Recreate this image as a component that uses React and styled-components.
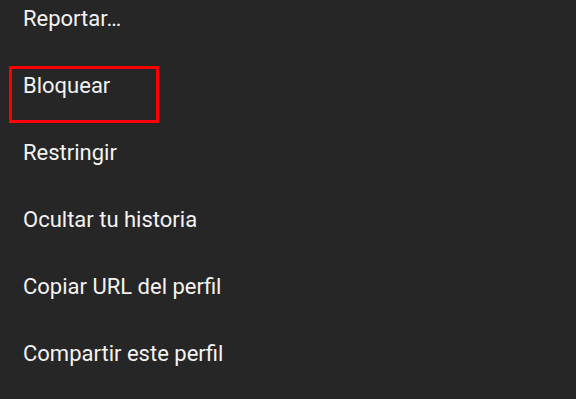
import { createGlobalStyle, styled } from "styled-components";

const GlobalStyle = createGlobalStyle`
  html, body {
    margin: 0;
    padding: 0;
    background: #262626;
    overflow: hidden;
  }
  body {
    font-family: Roboto, "Noto Sans", sans-serif;
  }
`;

const Screen = styled.div`
  width: 576px;
  height: 399px;
  background: #262626;
  overflow: hidden;
`;

const Menu = styled.ul`
  list-style: none;
  margin: -15px 0 0 0;
  padding: 0;
`;

const Item = styled.li`
  position: relative;
  height: 67px;
  line-height: 67px;
  padding-left: 23px;
  color: #f3f3f3;
  font-size: 22px;
  font-weight: 400;
`;

const Highlight = styled.span`
  position: absolute;
  left: 9px;
  top: 14px;
  width: 150px;
  height: 57px;
  box-sizing: border-box;
  border: 3px solid #ff0000;
  pointer-events: none;
`;

const items = [
  { label: "Reportar…" },
  { label: "Bloquear", marked: true },
  { label: "Restringir" },
  { label: "Ocultar tu historia" },
  { label: "Copiar URL del perfil" },
  { label: "Compartir este perfil" },
];

export default function App() {
  return (
    <>
      <GlobalStyle />
      <Screen>
        <Menu>
          {items.map((it) => (
            <Item key={it.label}>
              {it.label}
              {it.marked && <Highlight />}
            </Item>
          ))}
        </Menu>
      </Screen>
    </>
  );
}
